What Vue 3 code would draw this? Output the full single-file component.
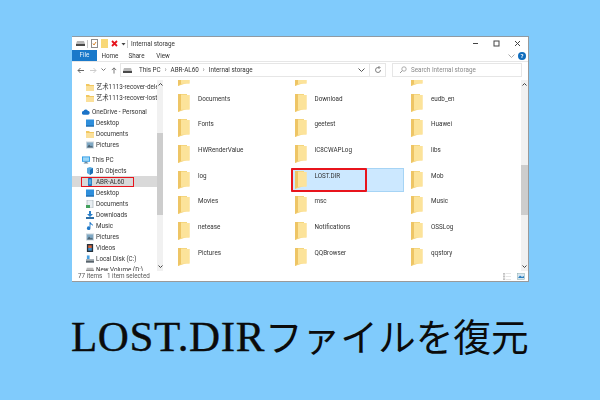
<template>
  <div class="page">
    <svg class="defs" aria-hidden="true">
      <symbol id="folder" viewBox="0 0 12 19">
        <path d="M0 1h9v15l-9 3z" fill="#f5d67e" />
        <path d="M1 2h10.500v14.500h-8l-3 2.500z" fill="#fbe29a" />
        <path d="M3 2h8.500v14.500H3z" fill="#fce39a" />
        <path d="M0 1h3v16l-3 2z" fill="#eec565" />
      </symbol>
      <symbol id="sfolder" viewBox="0 0 8 8">
        <path d="M0 1h3l1 1h4v6H0z" fill="#f2c860" />
        <path d="M0 3h8v5H0z" fill="#fbe09a" />
      </symbol>
      <symbol id="drive" viewBox="0 0 9 5">
        <path d="M1 0h7l1 3H0z" fill="#b8b8b8" />
        <path d="M0 3h9v2H0z" fill="#4a4a4a" />
      </symbol>
      <symbol id="cloud" viewBox="0 0 9 6">
        <path d="M2 6a2 2 0 0 1-.3-4A2.600 2.600 0 0 1 6.500 1.500 2.300 2.300 0 0 1 7 6z" fill="#1a73c8" />
      </symbol>
      <symbol id="desktop" viewBox="0 0 8 7">
        <path d="M0 0h8v7H0z" fill="#2f8fdc" />
        <path d="M0 6h8v1H0z" fill="#1b5f9e" />
      </symbol>
      <symbol id="docs" viewBox="0 0 8 8">
        <path d="M1 0h6v8H1z" fill="#e8eef2" stroke="#9aa7b0" stroke-width=".6" />
        <path d="M0 5h4v3H0z" fill="#42a05c" />
      </symbol>
      <symbol id="pictures" viewBox="0 0 8 7">
        <path d="M0 0h8v7H0z" fill="#c8d4dc" />
        <path d="M1 1h6v5H1z" fill="#7fa8c4" />
        <path d="M1 6l2-3 2 2 1-1 1 2z" fill="#4c6272" />
      </symbol>
      <symbol id="monitor" viewBox="0 0 9 8">
        <path d="M0 0h9v6H0z" fill="#2e9be6" />
        <path d="M1 1h7v4H1z" fill="#9bd6f7" />
        <path d="M3 6h3v1h1v1H2V7h1z" fill="#6c8a9e" />
      </symbol>
      <symbol id="cube" viewBox="0 0 8 8">
        <path d="M1 1l3-1 3 1v5l-3 2-3-2z" fill="#5aa9dd" />
        <path d="M4 3l3-2v5l-3 2z" fill="#1a70b5" />
      </symbol>
      <symbol id="phone" viewBox="0 0 6 10">
        <rect width="5" height="10" x=".5" rx="1" fill="#1d6fb5" />
        <rect width="3.400" height="6.500" x="1.300" y="1.500" fill="#4fa9e3" />
      </symbol>
      <symbol id="downloads" viewBox="0 0 8 8">
        <path d="M3 0h2v3h2L4 6 1 3h2z" fill="#2a7fc9" />
        <path d="M0 6h8v2H0z" fill="#2f6fa6" />
      </symbol>
      <symbol id="music" viewBox="0 0 7 9">
        <path d="M3 0h1c0 2 3 2 3 4H6C6 3 5 3 4 2.500V7a2 2 0 1 1-1-1.700z" fill="#1f78c8" />
      </symbol>
      <symbol id="videos" viewBox="0 0 7 9">
        <path d="M0 0h7v9H0z" fill="#26323c" />
        <path d="M1.500 1.500h4v3h-4z" fill="#d8663c" />
        <path d="M1.500 4.500h4v3h-4z" fill="#3f8fd0" />
      </symbol>
      <symbol id="disk" viewBox="0 0 9 8">
        <path d="M1 0h3v4H1z" fill="#48a0e2" />
        <path d="M0 4h9l0 4H0z" fill="#a9b2b8" />
        <path d="M0 6h9v2H0z" fill="#58636b" />
      </symbol>
    </svg>

    <div class="window">
      <div class="titlebar">
        <svg class="ic drive-ic"><use href="#drive" /></svg>
        <i class="sep"></i>
        <svg class="qa" viewBox="0 0 7 9">
          <rect x=".5" y=".5" width="6" height="8" fill="#fff" stroke="#8c8c8c" />
          <path d="M2 4.500l1 1.500 2-3" fill="none" stroke="#d4842c" />
        </svg>
        <svg class="qa" viewBox="0 0 7 9"><rect width="7" height="9" fill="#f8d878" /></svg>
        <svg class="qa" viewBox="0 0 7 7">
          <path d="M1 1l5 5M6 1L1 6" stroke="#e5141d" stroke-width="1.800" />
        </svg>
        <svg class="caret" viewBox="0 0 5 4"><path d="M.5 1h4L2.500 3.500z" fill="#444" /></svg>
        <i class="sep sep2"></i>
        <span class="title">Internal storage</span>
        <div class="winbtns">
          <svg viewBox="0 0 7 7"><path d="M1 3.500h5" stroke="#444" /></svg>
          <svg viewBox="0 0 7 7"><rect x="1" y="1" width="5" height="5" fill="none" stroke="#444" /></svg>
          <svg viewBox="0 0 7 7"><path d="M1 1l5 5M6 1L1 6" stroke="#444" /></svg>
        </div>
      </div>

      <div class="tabs">
        <span class="file">File</span>
        <span class="tab">Home</span>
        <span class="tab">Share</span>
        <span class="tab">View</span>
        <svg class="chev" viewBox="0 0 7 4"><path d="M.5.500l3 3 3-3" fill="none" stroke="#aaa" /></svg>
        <span class="help">?</span>
      </div>

      <div class="address">
        <div class="navs">
          <svg viewBox="0 0 8 7"><path d="M7 3.500H1M3.500 1L1 3.500 3.500 6" fill="none" stroke="#666" /></svg>
          <svg viewBox="0 0 8 7"><path d="M1 3.500h6M4.500 1L7 3.500 4.500 6" fill="none" stroke="#ccc" /></svg>
          <svg class="small" viewBox="0 0 5 4"><path d="M.5.500l2 2 2-2" fill="none" stroke="#777" /></svg>
          <svg viewBox="0 0 7 8"><path d="M3.500 7.500V1M1 3.500L3.500 1 6 3.500" fill="none" stroke="#666" /></svg>
        </div>
        <div class="crumbs">
          <svg class="ic"><use href="#drive" /></svg>
          <span class="crumb first">This PC</span>
          <span class="crumb">ABR-AL60</span>
          <span class="crumb">Internal storage</span>
          <svg class="drop" viewBox="0 0 7 4"><path d="M.5.500l3 3 3-3" fill="none" stroke="#555" /></svg>
          <i class="boxsep"></i>
          <svg class="refresh" viewBox="0 0 8 8">
            <path d="M6.500 4A2.500 2.500 0 1 1 4 1.500h1.500M4.500 0L6 1.500 4.500 3" fill="none" stroke="#666" stroke-width=".8" />
          </svg>
        </div>
        <div class="search">
          <svg viewBox="0 0 8 8">
            <circle cx="5" cy="3" r="2.200" fill="none" stroke="#999" stroke-width=".8" />
            <path d="M3.400 4.600L1 7" stroke="#999" />
          </svg>
          <span>Search Internal storage</span>
        </div>
      </div>

      <div class="body">
        <div class="side">
          <div
            v-for="item in sideItems"
            :key="item.name + item.icon"
            class="side-row"
            :class="[item.cls, { picked: item.picked }]"
          >
            <span class="side-inner" :class="{ marked: item.picked }">
              <svg class="side-ic"><use :href="'#' + item.icon" /></svg>
              <span class="side-name">{{ item.name }}</span>
            </span>
          </div>
        </div>
        <div class="scrollbar left">
          <svg class="arrow" viewBox="0 0 5 3"><path d="M.5 2.500l2-2 2 2" fill="none" stroke="#444" /></svg>
          <div class="track"><div class="thumb thumb-left"></div></div>
          <svg class="arrow" viewBox="0 0 5 3"><path d="M.5.500l2 2 2-2" fill="none" stroke="#444" /></svg>
        </div>

        <div class="files">
          <div class="grid">
            <div
              v-for="(name, i) in files"
              :key="i"
              class="file-item"
              :class="{ selected: name === 'LOST.DIR' }"
            >
              <span class="file-main" :class="{ marked2: name === 'LOST.DIR' }">
                <svg class="folder"><use href="#folder" /></svg>
                <span class="file-name">{{ name }}</span>
              </span>
            </div>
          </div>
        </div>

        <div class="scrollbar right">
          <svg class="arrow" viewBox="0 0 5 3"><path d="M.5 2.500l2-2 2 2" fill="none" stroke="#444" /></svg>
          <div class="track"><div class="thumb thumb-right"></div></div>
          <svg class="arrow" viewBox="0 0 5 3"><path d="M.5.500l2 2 2-2" fill="none" stroke="#444" /></svg>
        </div>
      </div>

      <div class="status">
        <span class="count">77 items</span>
        <span>1 item selected</span>
        <div class="views">
          <svg viewBox="0 0 8 7"><path d="M0 0h2v1.500H0zM0 2.700h2v1.500H0zM0 5.500h2V7H0zM3 .5h5M3 3.500h5M3 6.500h5" fill="#bbb" stroke="#ccc" stroke-width=".5" /></svg>
          <svg viewBox="0 0 8 7"><rect x=".5" y=".5" width="7" height="6" fill="#d6e6f2" stroke="#8aa" stroke-width=".5" /><path d="M1 5l2-2.500 2 1.500 2-1v2z" fill="#2a7fc0" /></svg>
        </div>
      </div>
    </div>

    <h1 class="headline"><span class="latin">LOST.DIR</span><span class="kana">ファイルを復元</span></h1>
  </div>
</template>

<script setup>
const sideItems = [
  { name: '艺术1113-recover-deleted', icon: 'sfolder', cls: 'lv2' },
  { name: '艺术1113-recover-lost-di', icon: 'sfolder', cls: 'lv2' },
  { name: 'OneDrive - Personal', icon: 'cloud', cls: 'lv1 gap3' },
  { name: 'Desktop', icon: 'desktop', cls: 'lv2' },
  { name: 'Documents', icon: 'sfolder', cls: 'lv2' },
  { name: 'Pictures', icon: 'pictures', cls: 'lv2' },
  { name: 'This PC', icon: 'monitor', cls: 'lv1 gap4' },
  { name: '3D Objects', icon: 'cube', cls: 'lv2' },
  { name: 'ABR-AL60', icon: 'phone', cls: 'lv2', picked: true },
  { name: 'Desktop', icon: 'desktop', cls: 'lv2' },
  { name: 'Documents', icon: 'docs', cls: 'lv2' },
  { name: 'Downloads', icon: 'downloads', cls: 'lv2' },
  { name: 'Music', icon: 'music', cls: 'lv2' },
  { name: 'Pictures', icon: 'pictures', cls: 'lv2' },
  { name: 'Videos', icon: 'videos', cls: 'lv2' },
  { name: 'Local Disk (C:)', icon: 'disk', cls: 'lv2' },
  { name: 'New Volume (D:)', icon: 'drive', cls: 'lv2' }
]

const files = [
  '', '', '',
  'Documents', 'Download', 'eudb_en',
  'Fonts', 'geetest', 'Huawei',
  'HWRenderValue', 'IC8CWAPLog', 'libs',
  'log', 'LOST.DIR', 'Mob',
  'Movies', 'msc', 'Music',
  'netease', 'Notifications', 'OSSLog',
  'Pictures', 'QQBrowser', 'qqstory'
]
</script>

<style>
html,
body {
  margin: 0;
  background: #80cbfc;
}
</style>

<style scoped>
.page {
  width: 600px;
  height: 400px;
  box-sizing: border-box;
  padding: 36px 71px 0 72px;
  background: #80cbfc;
  overflow: hidden;
  font-family: Roboto, "Noto Sans CJK SC", sans-serif;
}

.defs {
  position: absolute;
  width: 0;
  height: 0;
}

.window {
  height: 246px;
  box-sizing: border-box;
  display: flex;
  flex-direction: column;
  background: #fff;
  border-top: 1px solid #8f9aa3;
  border-right: 1px solid #9a9a9a;
  border-bottom: 1px solid #9a9a9a;
  font-size: 6.3px;
  line-height: 8px;
  color: #333;
  filter: blur(0.3px);
}

svg {
  display: block;
  flex: none;
}

.titlebar {
  height: 13px;
  display: flex;
  align-items: center;
  padding-left: 4px;
}

.ic {
  width: 9px;
  height: 5px;
}

.sep {
  width: 1px;
  height: 8px;
  margin: 0 3px 0 2px;
  background: #c8c8c8;
}

.sep2 {
  margin-left: 1px;
}

.qa {
  width: 7px;
  height: 9px;
  margin-right: 3px;
}

.caret {
  width: 5px;
  height: 4px;
}

.winbtns {
  margin-left: auto;
  display: flex;
  gap: 14px;
  padding-right: 7px;
}

.winbtns svg {
  width: 7px;
  height: 7px;
}

.tabs {
  height: 12px;
  display: flex;
  align-items: center;
  box-sizing: border-box;
  border-bottom: 1px solid #e6e6e6;
}

.file {
  width: 25px;
  height: 11px;
  margin-right: -3.500px;
  line-height: 11px;
  text-align: center;
  background: #1979ca;
  color: #e6f2fb;
}

.tab {
  margin-left: 6.500px;
  width: 20px;
  text-align: center;
}

.chev {
  width: 7px;
  height: 4px;
  margin-left: auto;
}

.help {
  width: 8px;
  height: 8px;
  margin: 0 2px 0 3px;
  border-radius: 50%;
  background: #0f6cbd;
  color: #fff;
  font-size: 6px;
  font-weight: 700;
  line-height: 8px;
  text-align: center;
}

.address {
  height: 18px;
  display: flex;
  align-items: center;
  padding: 0 6px 2px 0;
  box-sizing: border-box;
}

.navs {
  width: 48px;
  display: flex;
  align-items: center;
  padding-left: 5px;
  gap: 4px;
  box-sizing: border-box;
}

.navs svg {
  width: 8px;
  height: 7px;
}

.navs .small {
  width: 5px;
  height: 4px;
}

.crumbs {
  width: 266px;
  height: 14px;
  display: flex;
  align-items: center;
  box-sizing: border-box;
  border: 1px solid #e6e6e6;
  padding-left: 2px;
}

.crumb {
  margin-left: 4px;
}

.crumb.first {
  margin-left: 7px;
}

.crumb:not(:last-of-type)::after {
  content: "›";
  margin-left: 4px;
  color: #777;
}

.drop {
  width: 7px;
  height: 4px;
  margin-left: auto;
}

.boxsep {
  width: 1px;
  height: 12px;
  margin: 0 4px 0 4px;
  background: #e6e6e6;
}

.refresh {
  width: 8px;
  height: 8px;
  margin-right: 3px;
}

.search {
  margin-left: 6px;
  flex: 1;
  height: 14px;
  display: flex;
  align-items: center;
  box-sizing: border-box;
  border: 1px solid #e6e6e6;
  padding-left: 6px;
  color: #8a8a8a;
}

.search svg {
  width: 8px;
  height: 8px;
  margin-right: 4px;
}

.body {
  flex: 1;
  min-height: 0;
  display: flex;
}

.side {
  width: 85px;
  flex: none;
  overflow: hidden;
  padding-top: 1px;
}

.side-row {
  height: 11px;
  display: flex;
  align-items: center;
  white-space: nowrap;
}

.gap3 {
  margin-top: 3px;
}

.gap4 {
  margin-top: 4px;
}

.lv1 .side-inner {
  margin-left: 10px;
}

.lv2 .side-inner {
  margin-left: 14px;
}

.picked {
  background: #d9d9d9;
}

.side-inner {
  display: flex;
  align-items: center;
  height: 10px;
}

.marked {
  margin-left: 9px !important;
  padding: 0 10px 0 5px;
  outline: 1.500px solid #e8141c;
  outline-offset: -1.500px;
}

.side-ic {
  width: 8px;
  height: 8px;
  margin-right: 2px;
}

.scrollbar {
  width: 7px;
  flex: none;
  display: flex;
  flex-direction: column;
  align-items: center;
  background: #f1f1f1;
}

.scrollbar.left {
  width: 6px;
}

.arrow {
  width: 5px;
  height: 3px;
  margin: 3px 0;
}

.track {
  flex: 1;
  width: 100%;
}

.thumb {
  width: 100%;
  background: #cdcdcd;
}

.thumb-left {
  margin-top: 44px;
  height: 82px;
}

.thumb-right {
  margin-top: 76px;
  height: 50px;
}

.files {
  flex: 1;
  min-width: 0;
  overflow: hidden;
}

.grid {
  display: grid;
  grid-template-columns: repeat(3, 116.5px);
  grid-auto-rows: 25.7px;
  margin: -15px 0 0 11px;
}

.file-item {
  height: 24.500px;
  display: flex;
}

.file-main {
  display: flex;
  align-items: flex-start;
  height: 100%;
  box-sizing: border-box;
  padding: 2px 0 0 4px;
}

.selected {
  width: 113px;
  background: #cce8ff;
  box-shadow: inset 0 0 0 1px #a6d4f5;
}

.marked2 {
  width: 76px;
  border: 2px solid #e8141c;
  padding: 0 0 0 2px;
  border-radius: 1px;
}

.folder {
  width: 12px;
  height: 19px;
}

.file-name {
  margin: 2px 0 0 8px;
}

.status {
  height: 10px;
  display: flex;
  align-items: center;
  padding-left: 6px;
  color: #555;
}

.count {
  width: 29px;
}

.views {
  margin-left: auto;
  display: flex;
  gap: 6px;
  padding-right: 3px;
}

.views svg {
  width: 8px;
  height: 7px;
}

.headline {
  margin: 0 0 0 -1px;
  padding-top: 31px;
  display: flex;
  align-items: baseline;
  color: #0b0b0b;
  font-weight: 400;
  white-space: nowrap;
}

.latin {
  font-family: "Liberation Serif", serif;
  font-size: 43px;
  line-height: 44px;
  letter-spacing: 0.6px;
  -webkit-text-stroke: 0.4px #0b0b0b;
}

.kana {
  font-family: "Noto Sans CJK JP", sans-serif;
  font-size: 37.700px;
  line-height: 44px;
}
</style>
